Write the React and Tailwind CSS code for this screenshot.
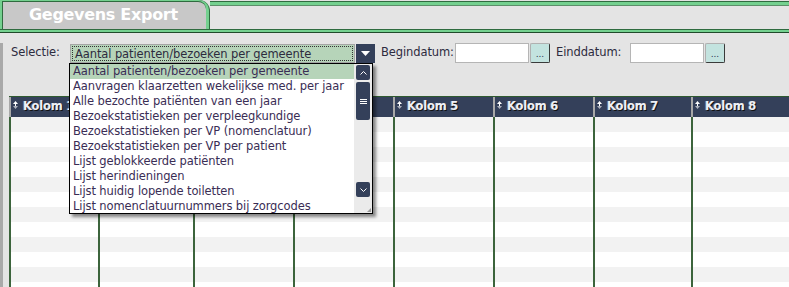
import React from 'react'

const cn = (...c) => c.filter(Boolean).join(' ')

const items = [
  'Aantal patienten/bezoeken per gemeente',
  'Aanvragen klaarzetten wekelijkse med. per jaar',
  'Alle bezochte patiënten van een jaar',
  'Bezoekstatistieken per verpleegkundige',
  'Bezoekstatistieken per VP (nomenclatuur)',
  'Bezoekstatistieken per VP per patient',
  'Lijst geblokkeerde patiënten',
  'Lijst herindieningen',
  'Lijst huidig lopende toiletten',
  'Lijst nomenclatuurnummers bij zorgcodes',
]

const cols = [
  { label: 'Kolom 1', w: 'w-[89px]' },
  { label: 'Kolom 2', w: 'w-[95px]' },
  { label: 'Kolom 3', w: 'w-[100px]' },
  { label: 'Kolom 4', w: 'w-[100px]' },
  { label: 'Kolom 5', w: 'w-[100px]' },
  { label: 'Kolom 6', w: 'w-[100px]' },
  { label: 'Kolom 7', w: 'w-[98px]' },
  { label: 'Kolom 8', w: 'w-[100px]' },
]

const SortIcon = () => (
  <svg width="5" height="8" viewBox="0 0 5 8" className="shrink-0 -mt-[4px]">
    <path d="M2.5 0 L5 3 L0 3 Z" fill="#fff" />
    <path d="M2 3 H3 V5 H2 Z" fill="#fff" />
    <path d="M0 5 L5 5 L2.5 8 Z" fill="#fff" opacity="0.6" />
  </svg>
)

const DotsButton = () => (
  <div className="w-[20px] h-[20px] ml-[1px] rounded-[2px] bg-[#c3e3df] border border-[#b0b0b0] border-r-[#3a3a3a] border-b-[#3a3a3a] flex items-center justify-center text-[9px] leading-none text-[#2b3350] pt-[3px]">
    ...
  </div>
)

const ScrollBtn = ({ children, className = '' }) => (
  <div className={cn('w-[14px] rounded-[2px] bg-[#34405a] flex items-center justify-center', className)}>{children}</div>
)

export default function App() {
  return (
    <div className="w-[789px] h-[287px] overflow-hidden bg-[#e4e4e4] relative font-['DejaVu_Sans',Verdana,sans-serif] text-[#2d2b3e]">
      {/* tab strip */}
      <div className="flex h-[29px]">
        <div className="w-[210px] h-full bg-[#2f6b3f] rounded-tr-[11px] pr-px">
          <div className="h-full bg-[#74d08f] rounded-tr-[10px] pt-[1px] pl-[2px] pr-[3px]">
            <div className="h-full bg-[#c8c8c8] rounded-tr-[8px] border-t border-l border-[#2f6b3f] pl-[26px] pt-[1px]">
              <span className="text-[16px] font-bold text-white leading-[20px] tracking-[-0.3px]">Gegevens Export</span>
            </div>
          </div>
        </div>
        <div className="flex-1 pt-px">
          <div className="h-px bg-[#2f6b3f]" />
          <div className="h-[3px] bg-[#74d08f]" />
          <div className="h-px bg-[#5d8f6a]" />
        </div>
      </div>
      <div className="h-px bg-[#2f6b3f]" />
      <div className="h-[2px] bg-[#74d08f]" />
      <div className="h-px bg-[#1f4a2a]" />

      {/* content */}
      <div className="border-l-[3px] border-[#a9a9a9] h-[254px]">
        <div className="flex items-center h-[20px] mt-[10px] text-[11.5px] tracking-[-0.1px]">
          <span className="ml-[8px] w-[59px]">Selectie:</span>
          <div className="flex h-[19px]">
            <div className="w-[285px] h-full border border-[#a5a5a5] bg-[#b6d4b9] p-px">
              <div className="h-full border border-dotted border-[#333] pl-[2px] leading-[14px] whitespace-nowrap">
                Aantal patienten/bezoeken per gemeente
              </div>
            </div>
            <div className="w-[19px] h-full bg-[#34405a] flex items-center justify-center ml-px">
              <svg width="9" height="5" viewBox="0 0 9 5"><path d="M0 0 H9 L4.5 5 Z" fill="#fff" /></svg>
            </div>
          </div>
          <span className="ml-[6px] w-[74px]">Begindatum:</span>
          <div className="w-[74px] h-[20px] bg-white border border-[#b5b5b5]" />
          <DotsButton />
          <span className="ml-[6px] w-[74px]">Einddatum:</span>
          <div className="w-[74px] h-[20px] bg-white border border-[#b5b5b5]" />
          <DotsButton />
        </div>

        {/* grid */}
        <div className="mt-[33px] ml-[6px] border-t border-[#2f5a2f] flex">
          {cols.map((c) => (
            <div key={c.label} className={cn('shrink-0 flex flex-col', c.w)}>
              <div className="h-[20px] bg-[#34405a] border-l-2 border-[#a8a8a8] flex items-center pl-[2px] gap-[5px]">
                <SortIcon />
                <span className="text-[11.5px] font-bold text-[#eef0f6] [text-shadow:1px_1px_0_#111,-1px_0_0_#6c7384] tracking-[-0.2px]">{c.label}</span>
              </div>
              {Array.from({ length: 12 }).map((_, r) => (
                <div
                  key={r}
                  className={cn('h-[15px] border-l-2 border-[#3c643c]', r % 2 === 0 ? 'bg-[#f2f2f2]' : 'bg-white')}
                />
              ))}
            </div>
          ))}
        </div>
      </div>

      {/* open dropdown list */}
      <div className="absolute left-[69px] top-[63px] w-[304px] h-[151px] bg-white border border-black shadow-[3px_3px_3px_rgba(0,0,0,0.45)] flex overflow-hidden">
        <div className="flex-1 min-w-0 text-[11.5px] tracking-[-0.1px] leading-[15px] text-[#3a2d55]">
          {items.map((t, i) => (
            <div key={t} className={cn('h-[15px] pl-[3px] whitespace-nowrap', i === 0 && 'bg-[#b6d4b9]')}>{t}</div>
          ))}
        </div>
        <div className="w-[18px] bg-[#ebebeb] flex flex-col items-center pt-px pb-[2px] relative">
          <ScrollBtn className="h-[15px]">
            <svg width="7" height="4" viewBox="0 0 7 4"><path d="M0.5 3.5 L3.5 0.5 L6.5 3.5" stroke="#fff" fill="none" /></svg>
          </ScrollBtn>
          <ScrollBtn className="h-[38px] mt-[2px]">
            <svg width="7" height="7" viewBox="0 0 7 7"><path d="M0 1.5 H7 M0 3.5 H7 M0 5.5 H7" stroke="#fff" /></svg>
          </ScrollBtn>
          <div className="flex-1" />
          <ScrollBtn className="h-[15px] mb-[14px]">
            <svg width="7" height="4" viewBox="0 0 7 4"><path d="M0.5 0.5 L3.5 3.5 L6.5 0.5" stroke="#fff" fill="none" /></svg>
          </ScrollBtn>
          <svg width="4" height="4" viewBox="0 0 4 4" className="absolute right-px bottom-px">
            <path d="M4 0 L4 4 L0 4 Z" fill="#999" />
          </svg>
        </div>
      </div>
    </div>
  )
}
